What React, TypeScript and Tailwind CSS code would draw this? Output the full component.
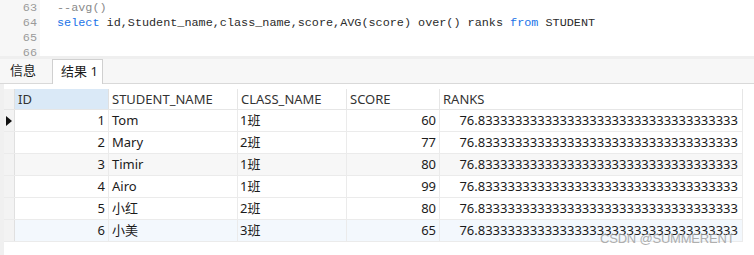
import React from "react";

const mono = { fontFamily: '"Liberation Mono", "DejaVu Sans Mono", monospace' };

const rows = [
  { id: 1, name: "Tom", cls: "1班", score: 60, bg: "bg-white" },
  { id: 2, name: "Mary", cls: "2班", score: 77, bg: "bg-white" },
  { id: 3, name: "Timir", cls: "1班", score: 80, bg: "bg-[#f7f7f7]" },
  { id: 4, name: "Airo", cls: "1班", score: 99, bg: "bg-white" },
  { id: 5, name: "小红", cls: "2班", score: 80, bg: "bg-white" },
  { id: 6, name: "小美", cls: "3班", score: 65, bg: "bg-[#f3f8fd]" },
];

const ranks = "76.8" + "3".repeat(34);

export default function App() {
  return (
    <div
      className="relative w-[754px] h-[255px] bg-white overflow-hidden text-[#1b1b1b]"
      style={{ fontFamily: '"Noto Sans", "Noto Sans CJK SC", sans-serif' }}
    >
      {/* editor */}
      <div className="flex h-[56px] overflow-hidden" style={mono}>
        <div className="w-[40px] bg-[#f7f7f7] pt-[1px] pr-[3px] text-right text-[11.8px] leading-[15px] text-[#9a9a9a]">
          <div>63</div>
          <div>64</div>
          <div>65</div>
          <div>66</div>
        </div>
        <div className="pl-[17px] pt-[1px] text-[11.8px] leading-[15px] whitespace-pre">
          <div className="text-[#8a8a8a]">--avg()</div>
          <div className="text-[#2b2b2b]">
            <span className="text-[#1a73e8]">select</span> id,Student_name,class_name,score,AVG(score) over() ranks{" "}
            <span className="text-[#1a73e8]">from</span> STUDENT
          </div>
        </div>
      </div>
      <div className="h-[3px] bg-[#efefef]" />

      {/* tabs */}
      <div className="flex h-[25px] items-end border-b border-[#d9d9d9] bg-[#f7f7f7] text-[13px]">
        <div className="w-[52px] h-[24px] flex items-center pl-[10px]">信息</div>
        <div className="w-[51px] h-[25px] -mb-px flex items-center pl-[8px] bg-white border border-b-0 border-[#d0d0d0]">
          结果 1
        </div>
      </div>

      {/* grid */}
      <div className="flex h-[171px]">
        <div className="w-[4px] bg-[#f0f0f0]" />
        <div className="pt-[5px] text-[13px]">
          <div className="flex h-[21px] border-b border-[#e6e6e6] text-[#333] leading-[20px]">
            <div className="w-[11px] bg-[#f3f3f3] border-r border-[#e0e0e0]" />
            <div className="w-[94px] bg-[#dae9f7] pl-[3px] border-r border-[#e0e0e0]">ID</div>
            <div className="w-[129px] pl-[3px] border-r border-[#e6e6e6]">STUDENT_NAME</div>
            <div className="w-[109px] pl-[3px] border-r border-[#e6e6e6]">CLASS_NAME</div>
            <div className="w-[93px] pl-[3px] border-r border-[#e6e6e6]">SCORE</div>
            <div className="w-[303px] pl-[3px] border-r border-[#e6e6e6]">RANKS</div>
          </div>
          {rows.map((r, i) => (
            <div key={r.id} className={`flex h-[22px] border-b border-[#ebebeb] leading-[21px] ${r.bg}`}>
              <div className="w-[11px] bg-[#f3f3f3] border-r border-[#e0e0e0] flex items-center justify-center">
                {i === 0 && (
                  <svg width="6" height="10" viewBox="0 0 6 10">
                    <path d="M0 0 L6 5 L0 10 Z" fill="#111" />
                  </svg>
                )}
              </div>
              <div className="w-[94px] pr-[3px] text-right border-r border-[#ebebeb]">{r.id}</div>
              <div className="w-[129px] pl-[3px] border-r border-[#ebebeb]">{r.name}</div>
              <div className="w-[109px] pl-[2px] border-r border-[#ebebeb]">{r.cls}</div>
              <div className="w-[93px] pr-[3px] text-right border-r border-[#ebebeb]">{r.score}</div>
              <div className="w-[303px] pr-[4px] text-right border-r border-[#ebebeb] overflow-hidden whitespace-nowrap">
                {ranks}
              </div>
            </div>
          ))}
        </div>
      </div>

      <div
        className="absolute left-[600px] top-[231px] whitespace-nowrap text-[13px] leading-[16px] tracking-[-0.2px] text-[#9c9c9c] opacity-80"
        style={{ fontFamily: '"Liberation Sans", Arial, sans-serif' }}
      >
        CSDN @SUMMERENT
      </div>
    </div>
  );
}
